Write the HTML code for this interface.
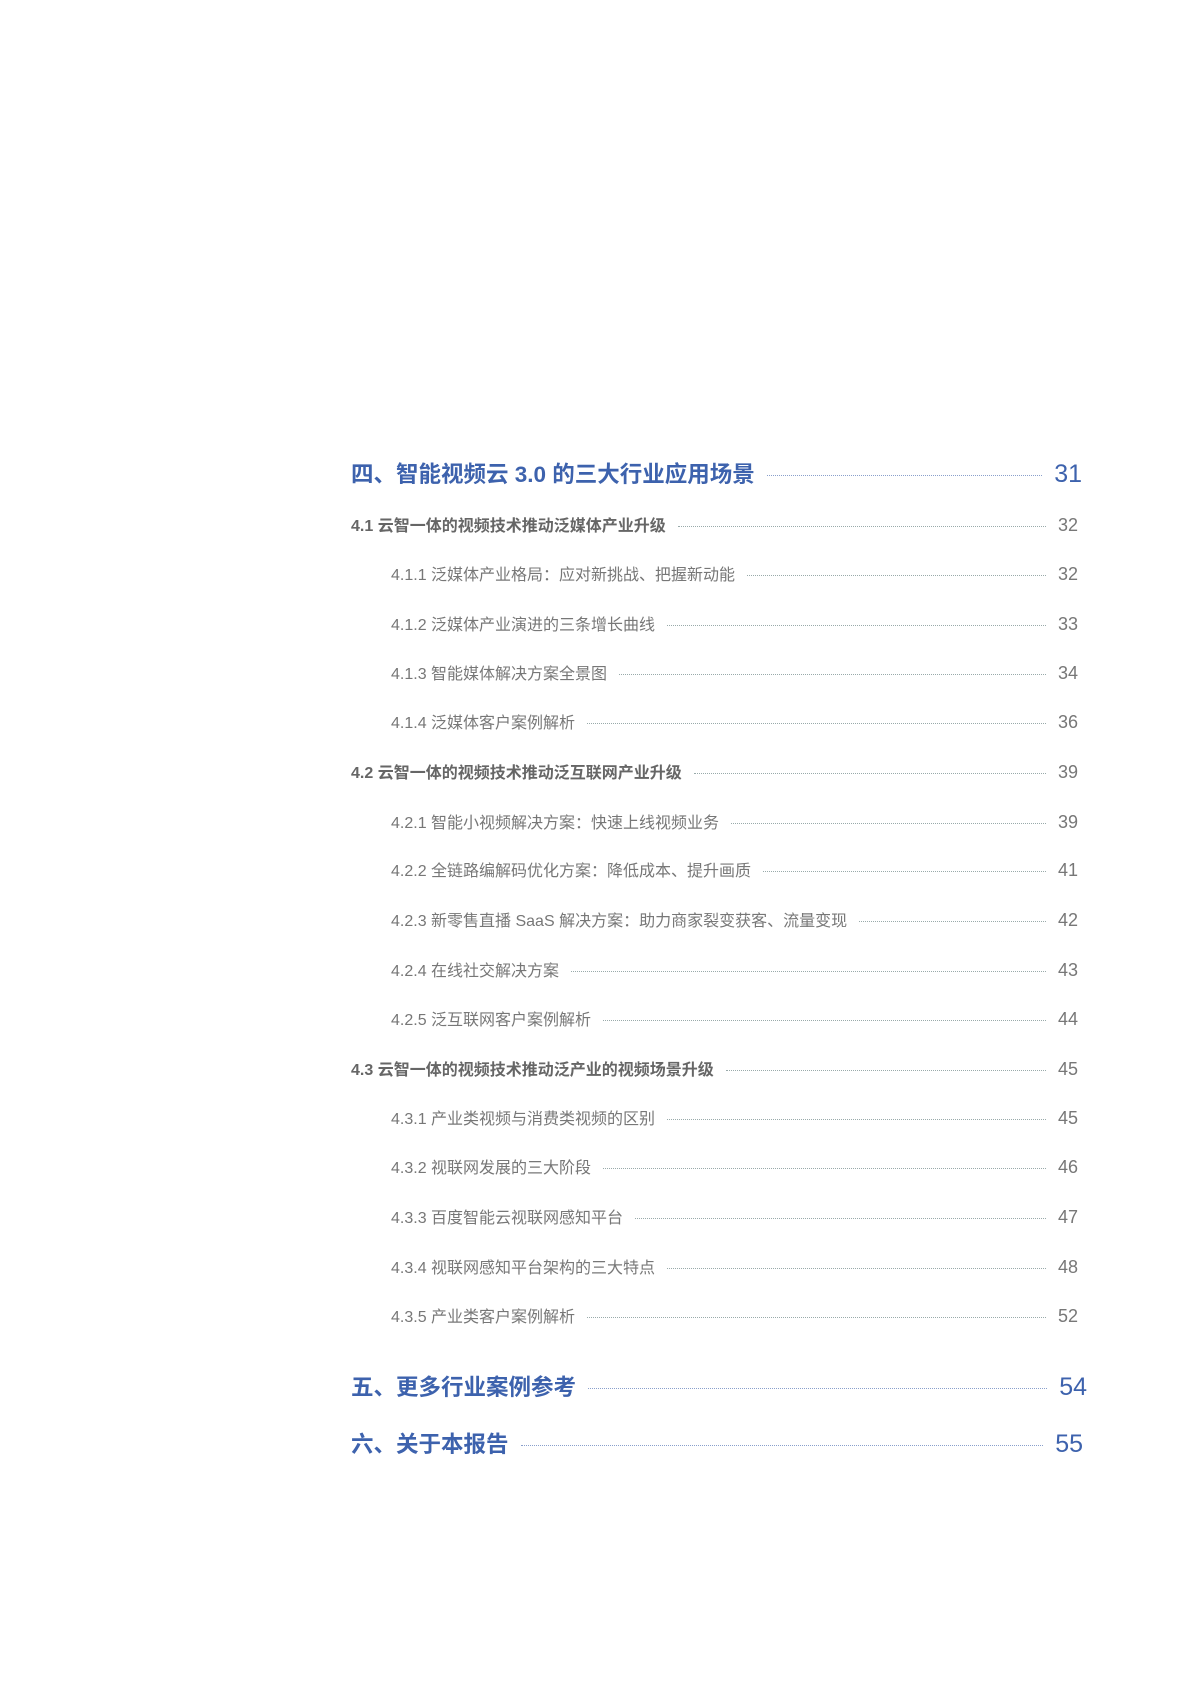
<!DOCTYPE html>
<html><head><meta charset="utf-8"><style>
body{margin:0;width:1200px;height:1698px;background:#fff;position:relative;font-family:"Liberation Sans","Noto Sans CJK SC",sans-serif;overflow:hidden}
.r{position:absolute;display:flex;align-items:center;height:30px;margin-top:-15px;white-space:nowrap}
.r .t{flex:none}
.r .d{flex:1;border-bottom:1.5px dotted #9aa;margin:0 12px;height:0;position:relative;top:2px}
.r .p{flex:none;position:relative;top:1px}
.h{left:351px;width:731px;color:#3d62ad;font-size:22.5px;font-weight:bold}
.h .d{border-color:#8aa0cc}
.h .p{font-size:25px;font-weight:normal}
.s{left:351px;width:727px;color:#666;font-size:16px;font-weight:bold}
.ss{left:391px;width:687px;color:#777;font-size:16px}
.s .p,.ss .p{font-size:18px;color:#777;font-weight:normal}
</style></head><body>
<div class="r h" style="top:473px"><span class="t">四、智能视频云 3.0 的三大行业应用场景</span><span class="d"></span><span class="p">31</span></div>
<div class="r s" style="top:524px"><span class="t">4.1 云智一体的视频技术推动泛媒体产业升级</span><span class="d"></span><span class="p">32</span></div>
<div class="r ss" style="top:573px"><span class="t">4.1.1 泛媒体产业格局：应对新挑战、把握新动能</span><span class="d"></span><span class="p">32</span></div>
<div class="r ss" style="top:623px"><span class="t">4.1.2 泛媒体产业演进的三条增长曲线</span><span class="d"></span><span class="p">33</span></div>
<div class="r ss" style="top:672px"><span class="t">4.1.3 智能媒体解决方案全景图</span><span class="d"></span><span class="p">34</span></div>
<div class="r ss" style="top:721px"><span class="t">4.1.4 泛媒体客户案例解析</span><span class="d"></span><span class="p">36</span></div>
<div class="r s" style="top:771px"><span class="t">4.2 云智一体的视频技术推动泛互联网产业升级</span><span class="d"></span><span class="p">39</span></div>
<div class="r ss" style="top:821px"><span class="t">4.2.1 智能小视频解决方案：快速上线视频业务</span><span class="d"></span><span class="p">39</span></div>
<div class="r ss" style="top:869px"><span class="t">4.2.2 全链路编解码优化方案：降低成本、提升画质</span><span class="d"></span><span class="p">41</span></div>
<div class="r ss" style="top:919px"><span class="t">4.2.3 新零售直播 SaaS 解决方案：助力商家裂变获客、流量变现</span><span class="d"></span><span class="p">42</span></div>
<div class="r ss" style="top:969px"><span class="t">4.2.4 在线社交解决方案</span><span class="d"></span><span class="p">43</span></div>
<div class="r ss" style="top:1018px"><span class="t">4.2.5 泛互联网客户案例解析</span><span class="d"></span><span class="p">44</span></div>
<div class="r s" style="top:1068px"><span class="t">4.3 云智一体的视频技术推动泛产业的视频场景升级</span><span class="d"></span><span class="p">45</span></div>
<div class="r ss" style="top:1117px"><span class="t">4.3.1 产业类视频与消费类视频的区别</span><span class="d"></span><span class="p">45</span></div>
<div class="r ss" style="top:1166px"><span class="t">4.3.2 视联网发展的三大阶段</span><span class="d"></span><span class="p">46</span></div>
<div class="r ss" style="top:1216px"><span class="t">4.3.3 百度智能云视联网感知平台</span><span class="d"></span><span class="p">47</span></div>
<div class="r ss" style="top:1266px"><span class="t">4.3.4 视联网感知平台架构的三大特点</span><span class="d"></span><span class="p">48</span></div>
<div class="r ss" style="top:1315px"><span class="t">4.3.5 产业类客户案例解析</span><span class="d"></span><span class="p">52</span></div>
<div class="r h" style="top:1386px;width:736px"><span class="t">五、更多行业案例参考</span><span class="d"></span><span class="p">54</span></div>
<div class="r h" style="top:1443px;width:732px"><span class="t">六、关于本报告</span><span class="d"></span><span class="p">55</span></div>
</body></html>
